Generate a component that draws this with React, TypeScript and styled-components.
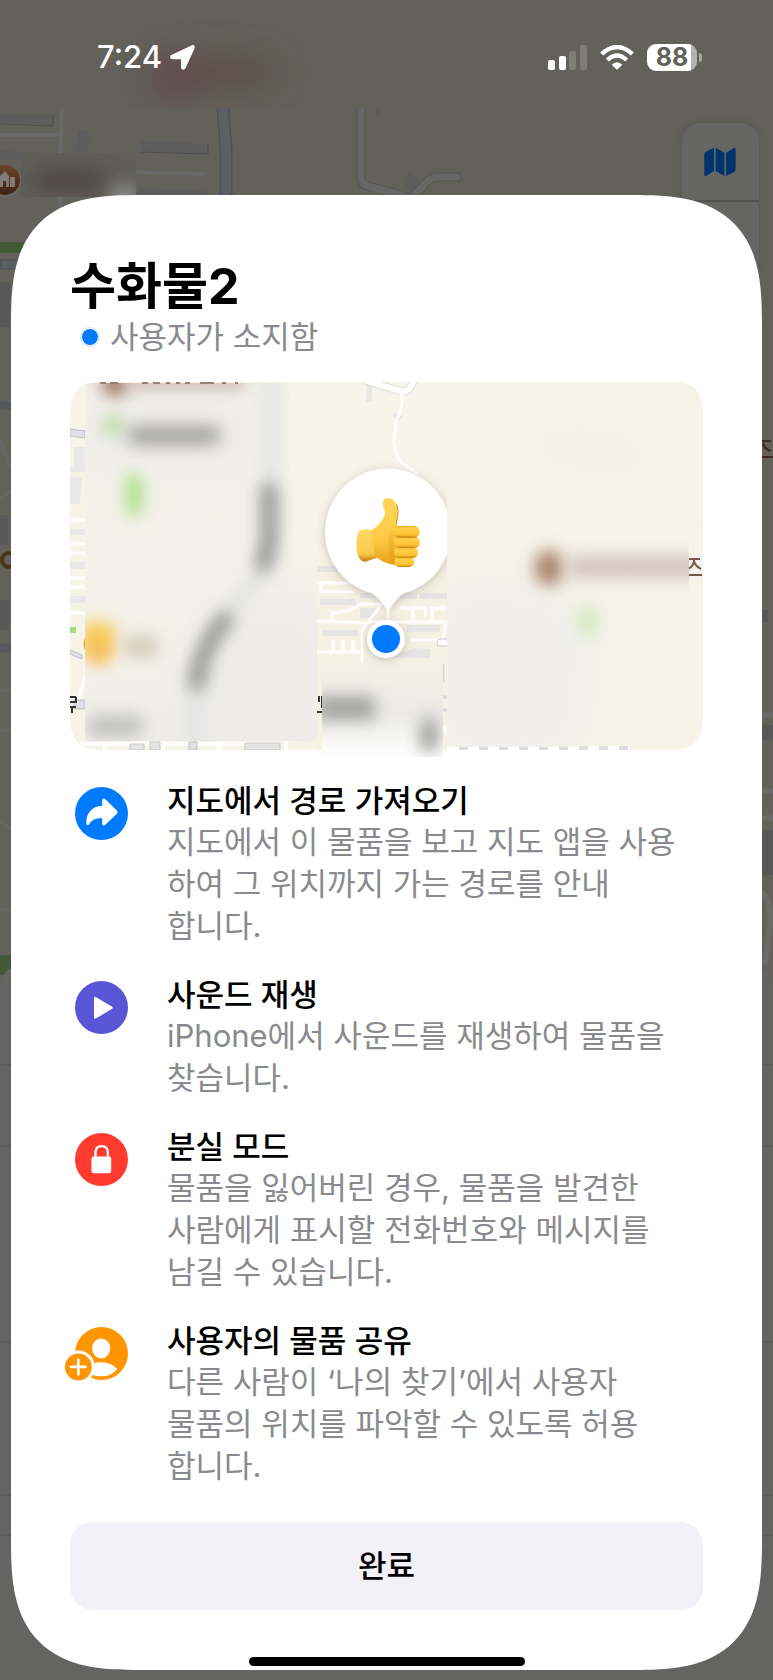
import React from "react";
import styled, { createGlobalStyle } from "styled-components";

const GlobalStyle = createGlobalStyle`
  * { box-sizing: border-box; }
  body {
    margin: 0;
    background: #62615a;
    font-family: Inter, "Noto Sans CJK KR", sans-serif;
  }
  h1, h2, p, ul { margin: 0; padding: 0; }
`;

const Screen = styled.div`
  position: relative;
  min-height: 100vh;
  padding: 0 11px 10px;
  overflow: hidden;
  background: #62615a;
`;

const BackgroundMap = styled.svg`
  position: absolute;
  inset: 0;
  width: 100%;
  height: 100%;
`;

const MapControls = styled.div`
  position: absolute;
  top: 123px;
  right: 14px;
  width: 77px;
  height: 154px;
  border-radius: 18px;
  background: #656564;
  box-shadow: 0 0 10px rgba(0, 0, 0, 0.1);
`;

const MapButton = styled.button`
  display: flex;
  align-items: center;
  justify-content: center;
  width: 100%;
  height: 79px;
  padding: 0 2px 0 0;
  border: 0;
  border-bottom: 2px solid #52524f;
  background: none;
`;

const StatusBar = styled.header`
  position: relative;
  display: flex;
  justify-content: space-between;
  height: 195px;
  padding: 38px 60px 0 86px;
  color: #fff;
`;

const StatusGroup = styled.div<{ $gap: number }>`
  display: flex;
  align-items: center;
  gap: ${(p) => p.$gap}px;
  height: 38px;
`;

const Clock = styled.time`
  font-size: 31px;
  font-weight: 500;
  line-height: 38px;
`;

const Battery = styled.div`
  display: flex;
  align-items: center;
  gap: 2px;
  &::after {
    content: "";
    width: 3px;
    height: 9px;
    border-radius: 0 4px 4px 0;
    background: #a9a9a6;
  }
`;

const BatteryBody = styled.span`
  width: 50px;
  height: 27px;
  border-radius: 9px;
  background: linear-gradient(to right, #fff 88%, #b2b2af 88%);
  color: #62615a;
  font-size: 25px;
  font-weight: 700;
  line-height: 27px;
  text-align: center;
`;

const Sheet = styled.main`
  position: relative;
  display: flex;
  flex-direction: column;
  padding: 62px 59px 4px;
  border-radius: 94px;
  background: #fff;
  @supports (corner-shape: superellipse(1.5)) {
    border-radius: 130px;
    corner-shape: superellipse(1.5);
  }
`;

const Title = styled.h1`
  font-size: 50px;
  font-weight: 700;
  line-height: 58px;
  color: #000;
`;

const Holder = styled.p`
  display: flex;
  align-items: center;
  gap: 10px;
  margin-top: 1px;
  padding-left: 10px;
  font-size: 31px;
  line-height: 42px;
  color: #8a8a8e;
`;

const HolderDot = styled.span`
  width: 20px;
  height: 20px;
  border: 1px solid #cfe4ff;
  border-radius: 50%;
  background: #007aff content-box;
  padding: 1px;
`;

const MapPreview = styled.svg`
  display: block;
  width: 100%;
  height: auto;
  margin-top: 24px;
  overflow: visible;
`;

const FeatureList = styled.ul`
  display: flex;
  flex-direction: column;
  gap: 27px;
  margin-top: 30px;
  padding-left: 5px;
  list-style: none;
`;

const Feature = styled.li`
  display: flex;
  align-items: flex-start;
  gap: 39px;
`;

const FeatureIcon = styled.svg`
  flex: none;
  width: 53px;
  height: 53px;
  margin-top: 7px;
  overflow: visible;
`;

const FeatureBody = styled.div`
  flex: 1;
  font-size: 31px;
`;

const FeatureTitle = styled.h2`
  font-size: 31px;
  font-weight: 500;
  line-height: 41px;
  color: #000;
`;

const FeatureText = styled.p`
  line-height: 42px;
  white-space: pre-line;
  color: #8a8a8e;
`;

const DoneButton = styled.button`
  width: 100%;
  height: 88px;
  margin-top: 35px;
  border: 0;
  border-radius: 22px;
  background: #f2f1f7;
  color: #000;
  font: 500 31px/42px Inter, "Noto Sans CJK KR", sans-serif;
`;

const HomeIndicator = styled.div`
  align-self: center;
  width: 276px;
  height: 9px;
  margin-top: 47px;
  border-radius: 5px;
  background: #000;
`;

function DimmedMap() {
  return (
    <BackgroundMap viewBox="0 0 773 1680" preserveAspectRatio="xMidYMin slice" aria-hidden="true">
      <defs>
        <filter id="haze" x="-60%" y="-120%" width="220%" height="340%">
          <feGaussianBlur stdDeviation="18" />
        </filter>
        <filter id="smear" x="-80%" y="-120%" width="260%" height="340%">
          <feGaussianBlur stdDeviation="10" />
        </filter>
        <linearGradient id="poi" x1="0" y1="0" x2="0" y2="1">
          <stop offset="0" stopColor="#6a432c" />
          <stop offset="1" stopColor="#3c2114" />
        </linearGradient>
        <clipPath id="topClip"><rect width="773" height="109" /></clipPath>
        <clipPath id="labelClip"><rect x="21" y="153" width="115" height="44" /></clipPath>
      </defs>
      <rect width="773" height="1680" fill="#62615a" />
      <g fill="none" stroke="#696968" strokeWidth="4">
        <path d="M62 109 60 155M0 135H61M136 172 204 174M60 197V215" />
      </g>
      <g fill="#5d5d5d">
        <path d="M0 113 53 115V125L0 123Z" />
        <path d="M0 151 46 152V160H0ZM78 131H89V148L84 152H74V143H77Z" />
        <path d="M141 141 208 144V154L141 151ZM138 188 206 191V197H138Z" />
        <path d="M408 173 420 179 413 193 404 188ZM376 109H380V118H376Z" />
      </g>
      <path d="M0 124 53 126V115M141 152 208 154V144" fill="none" stroke="#4d4d4c" />
      <path d="M223 109 226 150V200" fill="none" stroke="#4e5256" strokeWidth="13" />
      <path d="M223 109 226 150V200" fill="none" stroke="#5b5f63" strokeWidth="10" />
      <path d="M361 109V178Q362 186 371 187L390 192 412 198 425 184Q431 176 440 177H457" fill="none" stroke="#575757" strokeWidth="9" strokeLinecap="round" />
      <path d="M361 109V178Q362 186 371 187L390 192 412 198 425 184Q431 176 440 177H457" fill="none" stroke="#666666" strokeWidth="7" strokeLinecap="round" />
      <g clipPath="url(#topClip)">
        <rect width="773" height="109" fill="#62615a" />
        <g filter="url(#haze)">
          <circle cx="176" cy="76" r="22" fill="#624045" />
          <rect x="180" y="60" width="95" height="24" fill="#5d4745" />
        </g>
      </g>
      <g clipPath="url(#labelClip)">
        <rect x="21" y="153" width="115" height="44" fill="#5f5e59" />
        <rect x="35" y="171" width="70" height="20" fill="#4f4540" filter="url(#smear)" />
        <circle cx="124" cy="199" r="12" fill="#aaa" filter="url(#smear)" />
      </g>
      <circle cx="5" cy="181" r="16" fill="#6d6b66" />
      <circle cx="5" cy="180" r="15" fill="url(#poi)" />
      <path d="M0 187V176L5 171 9 176V187H6V181H3V187ZM10 177H15V187H10Z" fill="#807b75" />
      <path d="M0 242H30V253H0Z" fill="#3f5a34" />
      <path d="M0 260H20V269H0Z" fill="#5a5d61" stroke="#4b4d50" />
      <path d="M0 282H10V327H0ZM0 515H8V545H0ZM0 600H9V630H0Z" fill="#585858" />
      <path d="M0 405 11 406M0 648H11" stroke="#55595e" strokeWidth="9" />
      <path d="M0 440 11 470M0 500 11 490M0 690H11M0 730H11M0 820 11 830M0 910H11" stroke="#666665" strokeWidth="4" />
      <circle cx="9" cy="560" r="7" fill="none" stroke="#4a3317" strokeWidth="4" />
      <path d="M0 955H11V975H0Z" fill="#425a38" />
      <path d="M761 441H771M763 443Q764 449 771 451M761 457H773" fill="none" stroke="#3d2a25" strokeWidth="2" />
      <path d="M761 610H768V622H761ZM761 725H773V740H761ZM761 830H773V875H761Z" fill="#585858" />
      <path d="M761 715H773M761 791H773M761 818H773" stroke="#6a6a69" strokeWidth="5" />
      <path d="M761 893Q772 898 770 925L765 965" fill="none" stroke="#6b6b6a" strokeWidth="6" />
      <rect y="966" width="773" height="740" rx="20" fill="#646462" />
      <path d="M0 1065H773M0 1146H773M0 1342H773M0 1495H773M0 1535H773" stroke="#555553" />
    </BackgroundMap>
  );
}

function ThumbsUp() {
  return (
    <svg x="230" y="68" width="170" height="220" viewBox="0 0 510 660">
      <defs>
        <linearGradient id="palm" x1="0" y1="0" x2="0" y2="1">
          <stop offset="0" stopColor="#ffd45a" />
          <stop offset="0.6" stopColor="#ffcb45" />
          <stop offset="1" stopColor="#e9a01b" />
        </linearGradient>
        <linearGradient id="wrist" x1="0" y1="0" x2="0" y2="1">
          <stop offset="0" stopColor="#ffd868" />
          <stop offset="0.75" stopColor="#fdcb4a" />
          <stop offset="1" stopColor="#c37a12" />
        </linearGradient>
        <linearGradient id="finger" x1="0" y1="0" x2="0" y2="1">
          <stop offset="0" stopColor="#f0ae28" />
          <stop offset="0.25" stopColor="#ffcf45" />
          <stop offset="0.75" stopColor="#fdc233" />
          <stop offset="1" stopColor="#c97f10" />
        </linearGradient>
        <filter id="soft" x="-100%" width="300%"><feGaussianBlur stdDeviation="6" /></filter>
      </defs>
      <path d="M184 239Q192 236 222 240L240 320Q218 328 195 335 182 336 173 315 166 285 172 256 175 243 184 239Z" fill="url(#wrist)" />
      <path d="M215 241Q246 220 255 193 256 184 251 175 244 152 257 145 276 139 290 163 297 180 293 201L288 226 305 235 310 347Q268 346 247 334L224 319Z" fill="url(#palm)" />
      <path d="M290 163Q297 180 293 201L288 226" fill="none" stroke="#dd951d" strokeWidth="3" />
      <path d="M276 250Q270 285 281 340" fill="none" stroke="#d98c12" strokeWidth="9" opacity="0.65" filter="url(#soft)" />
      <rect x="283" y="321" width="60" height="30" rx="15" fill="url(#finger)" />
      <rect x="283" y="291" width="71" height="33" rx="16" fill="url(#finger)" />
      <rect x="283" y="260" width="77" height="34" rx="17" fill="url(#finger)" />
      <rect x="280" y="228" width="79" height="35" rx="17" fill="url(#finger)" />
    </svg>
  );
}

function LocationPreview() {
  return (
    <MapPreview viewBox="0 0 633 368" role="img" aria-label="수화물2 위치 지도">
      <defs>
        <clipPath id="card"><path d="M28 0H605Q633 0 633 32V336Q633 368 605 368H28Q0 368 0 336V32Q0 0 28 0Z" /></clipPath>
        <clipPath id="leftPatch"><rect x="15" y="1" width="232" height="358" /></clipPath>
        <clipPath id="midPatch"><rect x="252" y="280" width="121" height="95" /></clipPath>
        <clipPath id="rightPatch"><rect x="377" y="0" width="242" height="365" /></clipPath>
        <clipPath id="bubbleClip"><rect x="230" y="60" width="147" height="220" /></clipPath>
        <clipPath id="edgeLabel"><rect x="619" y="170" width="14" height="30" /></clipPath>
        <clipPath id="crisp"><rect x="247" y="184" width="130" height="184" /></clipPath>
        <filter id="b8" filterUnits="userSpaceOnUse" x="-60" y="-60" width="760" height="500"><feGaussianBlur stdDeviation="8" /></filter>
        <filter id="b24" filterUnits="userSpaceOnUse" x="-60" y="-60" width="760" height="500"><feGaussianBlur stdDeviation="24" /></filter>
        <filter id="drop" x="-30%" y="-30%" width="160%" height="160%">
          <feDropShadow dx="0" dy="2" stdDeviation="5" floodColor="#55503c" floodOpacity="0.3" />
        </filter>
        <linearGradient id="fade" x1="0" y1="0" x2="0" y2="1">
          <stop offset="0" stopColor="#f4f2e7" />
          <stop offset="0.55" stopColor="#ebeae6" />
          <stop offset="1" stopColor="#ffffff" />
        </linearGradient>
      </defs>

      <g clipPath="url(#card)">
        <rect width="633" height="368" fill="#f6f3e7" />
        <path d="M247 0H500Q420 90 247 150Z" fill="#f7f5e9" filter="url(#b24)" />
        <path d="M420 60Q480 30 560 50L620 90 520 95Z" fill="#f5f0e4" filter="url(#b24)" />

        <g fill="#e8e8e8">
          <path d="M4 65H15V90H4ZM0 84 14 88V90H0ZM0 95 12 96 10 122H0ZM0 147H15V153H0ZM0 180H15V187H0ZM0 214H15V221H0Z" />
          <path d="M297 0H302V20H296ZM325 30 333 34 329 39 322 34Z" />
        </g>
        <path d="M0 138H15M0 162H15M0 171H15M0 196H15M0 205H15M0 231H15M16 268V290L8 320" stroke="#fff" strokeWidth="3" fill="none" />
        <path d="M0 47 15 49V56L0 54ZM0 268 12 273V277L0 272ZM4 318H15V327H4Z" fill="#dfe0e6" stroke="#bfc1c8" />
        <path d="M0 245H6V251H0Z" fill="#a4dc86" />
        <path d="M16 254Q11 262 16 270Z" fill="#f1a71e" />
        <path d="M0 315H6M0 320H6V315M0 325H6M2 325V331" fill="none" stroke="#333" strokeWidth="2" />

        <path d="M10 362H210M216 358V368M35 368V362M93 358V368M149 358V368" stroke="#fff" strokeWidth="4" />
        <path d="M60 362H74V368H60ZM175 361H210V368H175ZM80 360H90V368H80Z" fill="#e4e4e4" stroke="#c9c9c9" />
        <path d="M119 360H127V368H119Z" fill="#dfe0e6" stroke="#bfc1c8" />
        <path d="M377 366H560" stroke="#fff" strokeWidth="4" />
        <path d="M389 366H560" stroke="#dedede" strokeWidth="4" strokeDasharray="9 11" />

        <path d="M294 -2 330 9Q337 10 340 6L345 -3" fill="none" stroke="#dfdfdf" strokeWidth="8" />
        <path d="M294 -2 330 9Q337 10 340 6L345 -3" fill="none" stroke="#fff" strokeWidth="6" />
        <path d="M332 12V20Q332 26 326 40L324 60Q325 72 332 81L348 92" fill="none" stroke="#fff" strokeWidth="3" />

        <g clipPath="url(#crisp)">
          <rect x="247" y="184" width="130" height="184" fill="#f5f1e3" />
          <g fill="#e5e5e3">
            <path d="M247 184H275V190H247ZM250 217H286V223H250ZM253 248H288V254H253ZM290 211H306V216H290Z" />
            <path d="M290 226H305V236H290ZM330 211H347V217H330ZM350 211H377V217H350ZM337 243H370V250H337ZM325 272 340 268 345 266 360 267V276H325Z" />
          </g>
          <g fill="none" stroke="#fff" strokeWidth="3">
            <path d="M247 201H280Q287 200 286 190M251 201V210H284M247 239 298 241M262 240V231L276 229 292 222H312L292 248V280" />
            <path d="M247 270H290M263 258V270M273 258V270M283 258V270M298 240H377M318 225V240M330 226H352Q357 226 355 235M343 226V240M362 240V226H377M340 258H373L376 240" />
          </g>
          <rect x="367" y="257" width="18" height="7" rx="3" fill="#fff" stroke="#c9c9c9" />
          <path d="M373 282V300M373 315H377M373 328H377" stroke="#d5d5d5" strokeWidth="3" />
          <path d="M249 314V320M252 314V326M247 330H252" stroke="#333" strokeWidth="2" />
          <path d="M373 345 388 365" stroke="#fff" strokeWidth="5" />
        </g>

        <g clipPath="url(#leftPatch)">
          <rect x="15" y="1" width="232" height="358" fill="#f4f1ea" />
          <rect x="205" y="-20" width="60" height="200" fill="#f6f4e8" filter="url(#b8)" />
          <path d="M15 20H195V80H15ZM150 230H260V380H0V320H110Z" fill="#ecebe9" filter="url(#b24)" />
          <path d="M201 -20V180L150 240 125 290V380" fill="none" stroke="#e3e4e4" strokeWidth="16" filter="url(#b8)" />
          <ellipse cx="45" cy="2" rx="14" ry="12" fill="#9c7562" filter="url(#b8)" />
          <rect x="60" y="-8" width="115" height="14" fill="#c8b1a8" filter="url(#b8)" />
          <ellipse cx="43" cy="44" rx="12" ry="10" fill="#bcdca6" filter="url(#b8)" />
          <rect x="58" y="43" width="92" height="21" rx="8" fill="#a9a8a4" filter="url(#b8)" />
          <rect x="55" y="92" width="18" height="42" rx="8" fill="#aee08c" filter="url(#b8)" />
          <path d="M199 102V155Q199 170 190 188M160 233Q130 262 126 308" fill="none" stroke="#9a9a98" strokeWidth="17" filter="url(#b8)" />
          <rect x="10" y="240" width="35" height="36" rx="10" fill="#f8cb58" filter="url(#b8)" />
          <circle cx="29" cy="272" r="10" fill="#f5b75c" filter="url(#b8)" />
          <rect x="54" y="254" width="33" height="21" fill="#d4cbb8" filter="url(#b8)" />
          <rect x="18" y="334" width="54" height="20" rx="6" fill="#bfbfbc" filter="url(#b8)" />
        </g>
        <path d="M30 1H36M32 2V0M40 1H48M72 1H78M83 1H90M96 1H100M106 1H110M115 1H120M130 1H144M152 1H156M165 1H168" stroke="#9a8075" strokeWidth="2" />

        <g clipPath="url(#rightPatch)">
          <path d="M360 200H460L530 240 510 380H360Z" fill="#f0efed" filter="url(#b24)" />
          <ellipse cx="479" cy="186" rx="15" ry="18" fill="#ac8771" filter="url(#b8)" />
          <rect x="498" y="174" width="140" height="22" fill="#d3c5be" filter="url(#b8)" />
          <ellipse cx="518" cy="239" rx="10" ry="16" fill="#d2e9bb" filter="url(#b8)" />
        </g>
        <rect x="619" y="173" width="14" height="24" fill="#f5f2ee" />
        <path d="M619 177H630M624 178Q624 184 618 187M624 179Q625 184 631 187M619 193H632" fill="none" stroke="#7b5548" strokeWidth="2" clipPath="url(#edgeLabel)" />
      </g>

      <g clipPath="url(#midPatch)">
        <rect x="252" y="280" width="121" height="95" fill="url(#fade)" />
        <rect x="245" y="314" width="60" height="24" fill="#a4a4a0" filter="url(#b8)" />
        <rect x="350" y="336" width="18" height="34" rx="8" fill="#a0a09d" filter="url(#b8)" />
      </g>

      <g clipPath="url(#bubbleClip)">
        <path d="M318 86.500A63.500 63.500 0 0 1 335 211Q328 213 318 230 309 214 301 211A63.500 63.500 0 0 1 318 86.500Z" fill="#fff" filter="url(#drop)" />
      </g>
      <ThumbsUp />
      <circle cx="316" cy="257" r="19" fill="#fff" filter="url(#drop)" />
      <circle cx="316" cy="257" r="14" fill="#007aff" />
    </MapPreview>
  );
}

const features = [
  {
    title: "지도에서 경로 가져오기",
    text: "지도에서 이 물품을 보고 지도 앱을 사용\n하여 그 위치까지 가는 경로를 안내\n합니다.",
    color: "#007aff",
    glyph: <path d="M81 56V42Q81 30 91 37L125 70Q129 75 125 80L91 112Q81 119 81 107V93C60 93 50 98 43 110Q39 116 34 112C31 80 50 57 81 56Z" fill="#fff" />,
  },
  {
    title: "사운드 재생",
    text: "iPhone에서 사운드를 재생하여 물품을\n찾습니다.",
    color: "#5856d6",
    glyph: <path d="M60 51V109L109 80Z" fill="#fff" stroke="#fff" strokeWidth="7" strokeLinejoin="round" />,
  },
  {
    title: "분실 모드",
    text: "물품을 잃어버린 경우, 물품을 발견한\n사람에게 표시할 전화번호와 메시지를\n남길 수 있습니다.",
    color: "#ff3b30",
    glyph: (
      <>
        <rect x="49" y="70" width="59" height="50" rx="7" fill="#fff" />
        <path d="M61 74V57Q62 39 79 39 97 39 98 57V74" fill="none" stroke="#fff" strokeWidth="7" />
      </>
    ),
  },
  {
    title: "사용자의 물품 공유",
    text: "다른 사람이 ‘나의 찾기’에서 사용자\n물품의 위치를 파악할 수 있도록 허용\n합니다.",
    color: "#ff9500",
    glyph: (
      <>
        <ellipse cx="78" cy="64" rx="27" ry="30" fill="#fff" />
        <path d="M34 118Q52 105 78 105 109 106 126 125 109 147 78 147 60 147 42 139Z" fill="#fff" />
        <circle cx="10" cy="119" r="49" fill="#fff" />
        <circle cx="10" cy="119" r="40" fill="#ff9500" />
        <path d="M-12 119H31M10 98V141" stroke="#fff" strokeWidth="8" strokeLinecap="round" />
      </>
    ),
  },
];

export default function App() {
  return (
    <>
      <GlobalStyle />
      <Screen>
        <DimmedMap />
        <MapControls>
          <MapButton aria-label="지도 유형">
            <svg width="32" height="30" viewBox="0 0 96 90" fill="#00346f" aria-hidden="true">
              <path d="M6 14 30 2V72L6 87Q1 89 1 83V21Q1 17 6 14Z" />
              <path d="M35 2 61 17V87L35 72Z" />
              <path d="M66 17 90 3Q95 1 95 8V67Q95 72 91 75L66 87Z" />
            </svg>
          </MapButton>
        </MapControls>

        <StatusBar>
          <StatusGroup $gap={8}>
            <Clock>7:24</Clock>
            <svg width="25" height="25" viewBox="0 0 75 75" fill="#fff" aria-hidden="true">
              <path d="M4 30 66 1Q76-2 74 9L47 69Q41 78 35 72 33 70 33 66V43H8Q0 42 0 36 0 32 4 30Z" />
            </svg>
          </StatusGroup>
          <StatusGroup $gap={13}>
            <svg width="39" height="25" viewBox="0 0 39 25" aria-label="셀룰러 신호" fill="#fff">
              <rect y="15" width="7" height="10" rx="2" />
              <rect x="11" y="11" width="7" height="14" rx="2" />
              <g fill="#7e7d78">
                <rect x="21" y="6" width="7" height="19" rx="2" />
                <rect x="32" y="0" width="7" height="25" rx="2" />
              </g>
            </svg>
            <svg width="34" height="25" viewBox="0 0 102 75" aria-label="Wi-Fi">
              <path d="M5 27Q51-15 97 27" fill="none" stroke="#fff" strokeWidth="13" />
              <path d="M22 45Q51 18 80 45" fill="none" stroke="#fff" strokeWidth="13" />
              <path d="M35 59Q51 44 67 59L53 73Q51 75 49 73Z" fill="#fff" />
            </svg>
            <Battery>
              <BatteryBody>88</BatteryBody>
            </Battery>
          </StatusGroup>
        </StatusBar>

        <Sheet>
          <Title>수화물2</Title>
          <Holder>
            <HolderDot />
            사용자가 소지함
          </Holder>
          <LocationPreview />
          <FeatureList>
            {features.map((f) => (
              <Feature key={f.title}>
                <FeatureIcon viewBox="0 0 158 158" aria-hidden="true">
                  <circle cx="79" cy="79" r="79" fill={f.color} />
                  {f.glyph}
                </FeatureIcon>
                <FeatureBody>
                  <FeatureTitle>{f.title}</FeatureTitle>
                  <FeatureText>{f.text}</FeatureText>
                </FeatureBody>
              </Feature>
            ))}
          </FeatureList>
          <DoneButton>완료</DoneButton>
          <HomeIndicator />
        </Sheet>
      </Screen>
    </>
  );
}
